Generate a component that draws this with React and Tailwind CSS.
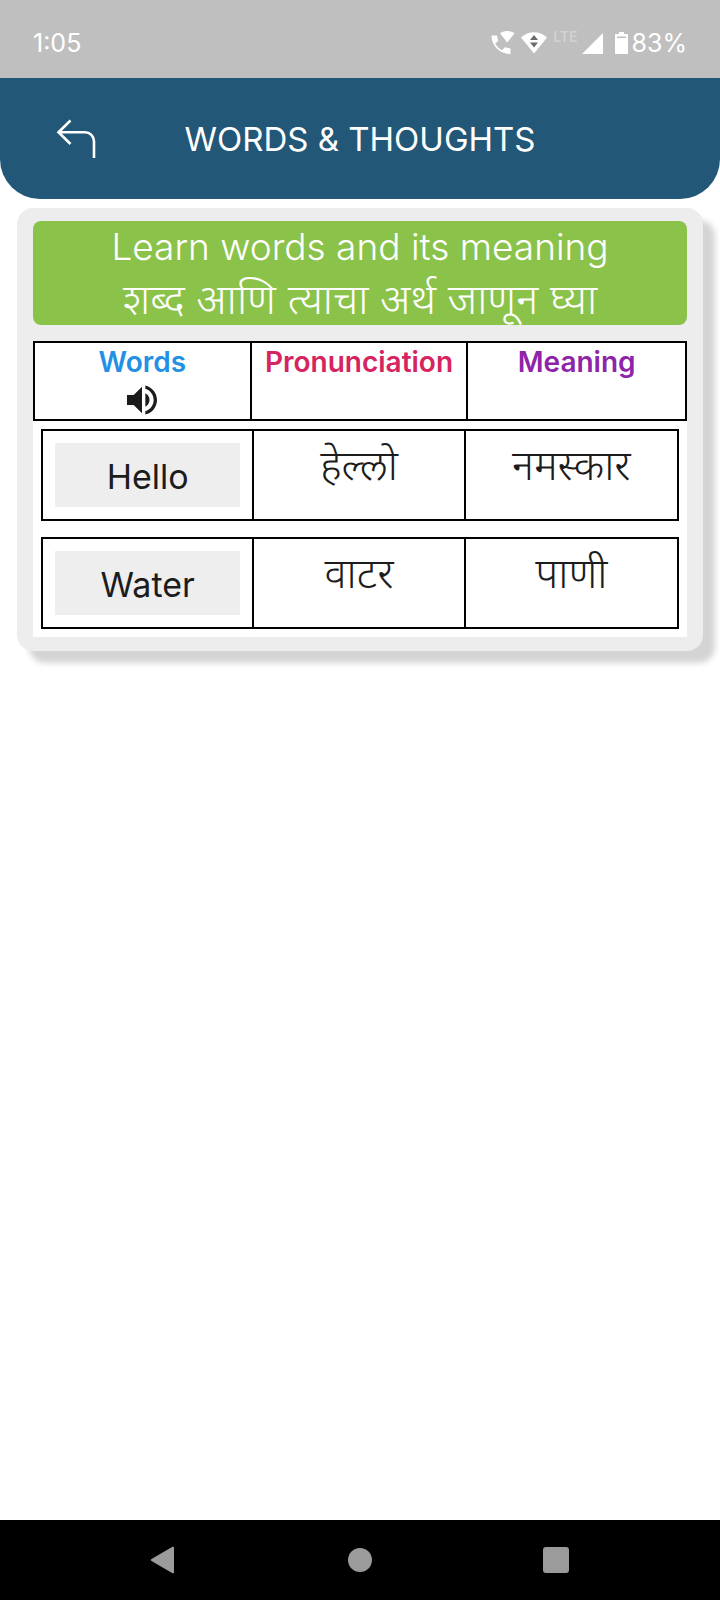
import React from 'react';
import { MdVolumeUp } from 'react-icons/md';

const words = [
    { word: 'Hello', pronunciation: 'हेल्लो', meaning: 'नमस्कार' },
    { word: 'Water', pronunciation: 'वाटर', meaning: 'पाणी' },
];

const App = () => {
    return (
        <div className="min-h-screen w-full flex flex-col bg-white font-['Inter','Noto_Sans',sans-serif] text-[#1c1c1c]">
            <StatusBar />

            {/* --- APP BAR --- */}
            <header className="grid grid-cols-[1fr_auto_1fr] items-center h-[121px] bg-[#225778] rounded-b-[40px] text-white">
                <button type="button" aria-label="Back" className="justify-self-start ml-14">
                    <svg width="40" height="40" viewBox="0 0 40 40" fill="none" stroke="currentColor" strokeWidth="2.6">
                        <path d="M14.500 1.500 2.500 13.200 14.500 25" />
                        <path d="M2.500 13.200H29c5 0 9 4 9 9V39" />
                    </svg>
                </button>
                <h1 className="text-[33px] leading-10">WORDS &amp; THOUGHTS</h1>
            </header>

            <main className="flex-1">
                <section className="mt-[9px] mx-[17px] px-4 pt-[13px] pb-3.5 bg-[#ededed] rounded-2xl shadow-[12px_12px_6px_#d4d4d4]">
                    <div className="bg-[#8bc34a] rounded-lg text-center text-white leading-[52px]">
                        <h2 className="text-[37px] font-light">Learn words and its meaning</h2>
                        <p lang="mr" className="text-[42px] font-light">शब्द आणि त्याचा अर्थ जाणून घ्या</p>
                    </div>

                    <table className="block mt-4 pb-2 bg-white">
                        <thead className="block">
                            <tr className="grid grid-cols-3 h-20 border-2 border-black divide-x-2 divide-black text-[28px] leading-9">
                                <th scope="col" className="pt-px font-semibold text-[#2490e4]">
                                    Words
                                    <MdVolumeUp className="mx-auto text-[#1c1c1c]" size={40} />
                                </th>
                                <th scope="col" className="pt-px font-semibold text-[#d6245f]">Pronunciation</th>
                                <th scope="col" className="pt-px font-semibold text-[#8e24aa]">Meaning</th>
                            </tr>
                        </thead>
                        <tbody className="flex flex-col gap-4 px-2 pt-2">
                            {words.map((item) => (
                                <tr key={item.word} className="grid grid-cols-3 h-[92px] border-2 border-black divide-x-2 divide-black text-center text-[42px] leading-[52px]">
                                    <td className="p-3">
                                        <button type="button" className="w-full h-16 pt-1 bg-[#eeeeee] text-[34px]">{item.word}</button>
                                    </td>
                                    <td lang="mr" className="pt-2 font-light">{item.pronunciation}</td>
                                    <td lang="mr" className="pt-2 font-light">{item.meaning}</td>
                                </tr>
                            ))}
                        </tbody>
                    </table>
                </section>
            </main>

            <NavBar />
        </div>
    );
};

const StatusBar = () => (
    <div className="flex items-center justify-between h-[78px] pt-2 px-[33px] bg-[#bfbfbf] text-white text-[25px] leading-8">
        <span>1:05</span>
        <div className="flex items-center">
            {/* Wi-Fi call */}
            <svg className="mr-1.5" width="24" height="24" viewBox="0 0 24 24" fill="currentColor">
                <path d="M9 2.300C13.500-.8 19-.8 23.500 2.300L16.200 11.500Z" />
                <path d="M.5 4.500h5.500l1.200 5.600-3 2.300c1.600 3 4 5.300 7 6.800l2.500-3 5.800 1.200V23C9 23.500.3 14.500.5 4.500Z" />
            </svg>
            <svg className="mr-1.5" width="26" height="22" viewBox="0 0 26 22">
                <path d="M0 5.500C7.500-1.500 18.500-1.500 26 5.500L13 21.500Z" fill="currentColor" />
                <path d="M13 3 17 8H9ZM13 15.500 9 10.500h8Z" fill="#6b6b6b" />
            </svg>
            <span className="mr-1 mb-3 text-[14px] leading-4 font-semibold text-[#d2d2d2]">LTE</span>
            <svg className="mr-3" width="21" height="21" viewBox="0 0 21 21" fill="currentColor">
                <path d="M21 0V21H0Z" />
            </svg>
            <svg className="mr-1" width="13" height="22" viewBox="0 0 13 22">
                <path d="M4 0h5v2h3c.6 0 1 .4 1 1v18c0 .6-.4 1-1 1H1c-.6 0-1-.4-1-1V3c0-.6.4-1 1-1h3Z" fill="currentColor" />
                <path d="M2 4.500h9v1.500H2Z" fill="#bfbfbf" />
            </svg>
            <span>83%</span>
        </div>
    </div>
);

const NavBar = () => (
    <nav className="grid grid-cols-3 items-center justify-items-center h-20 px-[66px] bg-black text-[#9b9b9b]">
        <button type="button" aria-label="Back">
            <svg width="28" height="28" viewBox="0 0 28 28" fill="currentColor">
                <path d="M22.500.8c.8-.4 1.500 0 1.500 1v24.400c0 1-.7 1.400-1.500 1L1.500 15c-1-.6-1-1.400 0-2Z" />
            </svg>
        </button>
        <button type="button" aria-label="Home" className="size-6 rounded-full bg-[#9b9b9b]" />
        <button type="button" aria-label="Recent apps" className="size-[26px] rounded-[3px] bg-[#9b9b9b]" />
    </nav>
);

export default App;
